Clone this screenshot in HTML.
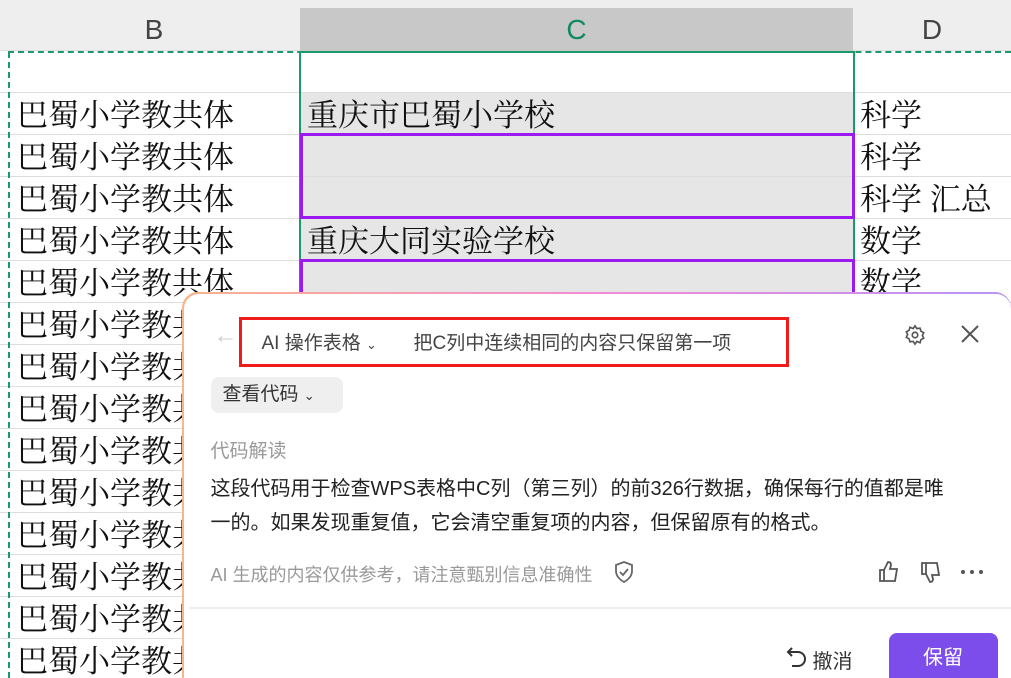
<!DOCTYPE html>
<html><head><meta charset="utf-8"><style>
*{margin:0;padding:0;box-sizing:border-box}
html,body{width:1011px;height:678px;overflow:hidden}
body{background:#fff;position:relative;font-family:"Liberation Sans","Noto Sans CJK SC",sans-serif}
.hdr{position:absolute;top:0;left:0;width:1011px;height:51px;background:#eeeeee;border-bottom:1px solid #ddd}
.hc{position:absolute;top:8px;height:43px;font-size:28px;color:#444;text-align:center;line-height:44px}
.cell{position:absolute;font-family:"Liberation Serif","Noto Serif CJK SC",serif;font-size:31px;color:#111;line-height:42px;white-space:nowrap}
.hl{position:absolute;left:0;width:1011px;height:1px;background:#ddd}
.panel{position:absolute;left:182px;top:292px;width:829px;height:386px;border-radius:16px 16px 0 0;padding:1.5px 0 0 1.5px;background:linear-gradient(90deg,#f8b48c,#f38bd6 50%,#b894f5);overflow:hidden}
.pin{width:100%;height:100%;background:#fff;border-radius:15px 15px 0 0;position:relative}
.t{position:absolute;white-space:nowrap}
</style></head><body>
<div class="hdr"></div>
<div class="hc" style="left:8px;width:292px">B</div>
<div class="hc" style="left:300px;width:553px;background:#c8c8c8;color:#0f8a5f">C</div>
<div class="hc" style="left:853px;width:158px">D</div>
<div style="position:absolute;left:300px;top:92px;width:553px;height:210px;background:#e6e6e6"></div>
<div class="hl" style="top:92px"></div><div class="hl" style="top:134px"></div><div class="hl" style="top:176px"></div><div class="hl" style="top:218px"></div><div class="hl" style="top:260px"></div>
<div class="hl" style="top:302px"></div><div class="hl" style="top:344px"></div><div class="hl" style="top:386px"></div><div class="hl" style="top:428px"></div><div class="hl" style="top:470px"></div><div class="hl" style="top:512px"></div><div class="hl" style="top:554px"></div><div class="hl" style="top:596px"></div><div class="hl" style="top:638px"></div>
<div style="position:absolute;left:8px;top:51px;width:1003px;border-top:2px dashed #1a9a6a"></div>
<div style="position:absolute;left:8px;top:52px;height:626px;border-left:2px dashed #1a9a6a"></div>
<div style="position:absolute;left:299px;top:51px;width:556px;height:627px;border:2px solid #1a9a6a;border-bottom:none"></div>
<div style="position:absolute;left:300px;top:133px;width:555px;height:86px;border:3px solid #9b1af0"></div>
<div style="position:absolute;left:300px;top:259px;width:555px;height:86px;border:3px solid #9b1af0"></div>
<div class="cell" style="left:17px;top:95px">巴蜀小学教共体</div>
<div class="cell" style="left:17px;top:137px">巴蜀小学教共体</div>
<div class="cell" style="left:17px;top:179px">巴蜀小学教共体</div>
<div class="cell" style="left:17px;top:221px">巴蜀小学教共体</div>
<div class="cell" style="left:17px;top:263px">巴蜀小学教共体</div>
<div class="cell" style="left:17px;top:305px">巴蜀小学教共体</div>
<div class="cell" style="left:17px;top:347px">巴蜀小学教共体</div>
<div class="cell" style="left:17px;top:389px">巴蜀小学教共体</div>
<div class="cell" style="left:17px;top:431px">巴蜀小学教共体</div>
<div class="cell" style="left:17px;top:473px">巴蜀小学教共体</div>
<div class="cell" style="left:17px;top:515px">巴蜀小学教共体</div>
<div class="cell" style="left:17px;top:557px">巴蜀小学教共体</div>
<div class="cell" style="left:17px;top:599px">巴蜀小学教共体</div>
<div class="cell" style="left:17px;top:641px">巴蜀小学教共体</div>
<div class="cell" style="left:307px;top:95px">重庆市巴蜀小学校</div>
<div class="cell" style="left:307px;top:221px">重庆大同实验学校</div>
<div class="cell" style="left:860px;top:95px">科学</div>
<div class="cell" style="left:860px;top:137px">科学</div>
<div class="cell" style="left:860px;top:179px">科学 汇总</div>
<div class="cell" style="left:860px;top:221px">数学</div>
<div class="cell" style="left:860px;top:263px">数学</div>
<div class="panel"><div class="pin">
<div class="t" style="left:30px;top:28px;font-size:24px;color:#ccc">←</div>
<div class="t" style="left:55px;top:23px;width:550px;height:50px;border:3px solid #f01c1c"></div>
<div class="t" style="left:78px;top:34px;font-size:19px;color:#444">AI 操作表格 <span style="font-size:13px">⌄</span></div>
<div class="t" style="left:230px;top:34px;font-size:19px;color:#444">把C列中连续相同的内容只保留第一项</div>
<svg class="t" style="left:720px;top:30px" width="22" height="22" viewBox="0 0 24 24" fill="none" stroke="#555" stroke-width="1.8"><circle cx="12" cy="12" r="3"/><path d="M12 2l2 3 3.5-.5 1 3.4 3 1.6-1.5 3 1.5 3-3 1.6-1 3.4L14 19l-2 3-2-3-3.5.5-1-3.4-3-1.6 1.5-3-1.5-3 3-1.6 1-3.4L10 5z"/></svg>
<svg class="t" style="left:776px;top:30px" width="20" height="20" viewBox="0 0 20 20" stroke="#555" stroke-width="2"><path d="M2 2L18 18M18 2L2 18"/></svg>
<div class="t" style="left:27px;top:83px;width:132px;height:36px;background:#efefef;border-radius:8px;font-size:19px;color:#333;line-height:36px;padding-left:12px">查看代码 <span style="font-size:13px">⌄</span></div>
<div class="t" style="left:27px;top:142px;font-size:19px;color:#999">代码解读</div>
<div class="t" style="left:27px;top:178px;font-size:20px;color:#222;line-height:34px;white-space:normal;width:745px">这段代码用于检查WPS表格中C列（第三列）的前326行数据，确保每行的值都是唯一的。如果发现重复值，它会清空重复项的内容，但保留原有的格式。</div>
<div class="t" style="left:27px;top:267px;font-size:18px;color:#999">AI 生成的内容仅供参考，请注意甄别信息准确性</div>
<svg class="t" style="left:430px;top:267px" width="20" height="22" viewBox="0 0 20 22" fill="none" stroke="#666" stroke-width="1.8"><path d="M10 1L2 4v6c0 5 4 9 8 11 4-2 8-6 8-11V4z"/><path d="M6 11l3 3 5-6"/></svg>
<svg class="t" style="left:694px;top:267px" width="22" height="22" viewBox="0 0 22 22" fill="none" stroke="#555" stroke-width="1.8"><path d="M2 9h4v11H2zM6 9l4-8c2 0 3 1 3 3l-1 4h7l-2 12H6"/></svg>
<svg class="t" style="left:736px;top:267px" width="22" height="22" viewBox="0 0 22 22" fill="none" stroke="#555" stroke-width="1.8"><path d="M2 2h4v11H2zM6 13l4 8c2 0 3-1 3-3l-1-4h7L17 2H6"/></svg>
<svg class="t" style="left:776px;top:275px" width="24" height="6" viewBox="0 0 24 6" fill="#555"><circle cx="3" cy="3" r="2"/><circle cx="12" cy="3" r="2"/><circle cx="21" cy="3" r="2"/></svg>
<div class="t" style="left:5px;top:313px;width:830px;height:2px;background:#eee"></div>
<svg class="t" style="left:602px;top:352px" width="22" height="24" viewBox="0 0 22 24" fill="none" stroke="#333" stroke-width="2"><path d="M6 2L2 6l4 4"/><path d="M2 6h10a7 7 0 0 1 0 14H6"/></svg>
<div class="t" style="left:629px;top:351px;font-size:20px;color:#333">撤消</div>
<div class="t" style="left:705px;top:339px;width:109px;height:52px;background:#7c4dea;border-radius:8px;color:#fff;font-size:20px;text-align:center;line-height:50px">保留</div>
</div></div>
</body></html>
